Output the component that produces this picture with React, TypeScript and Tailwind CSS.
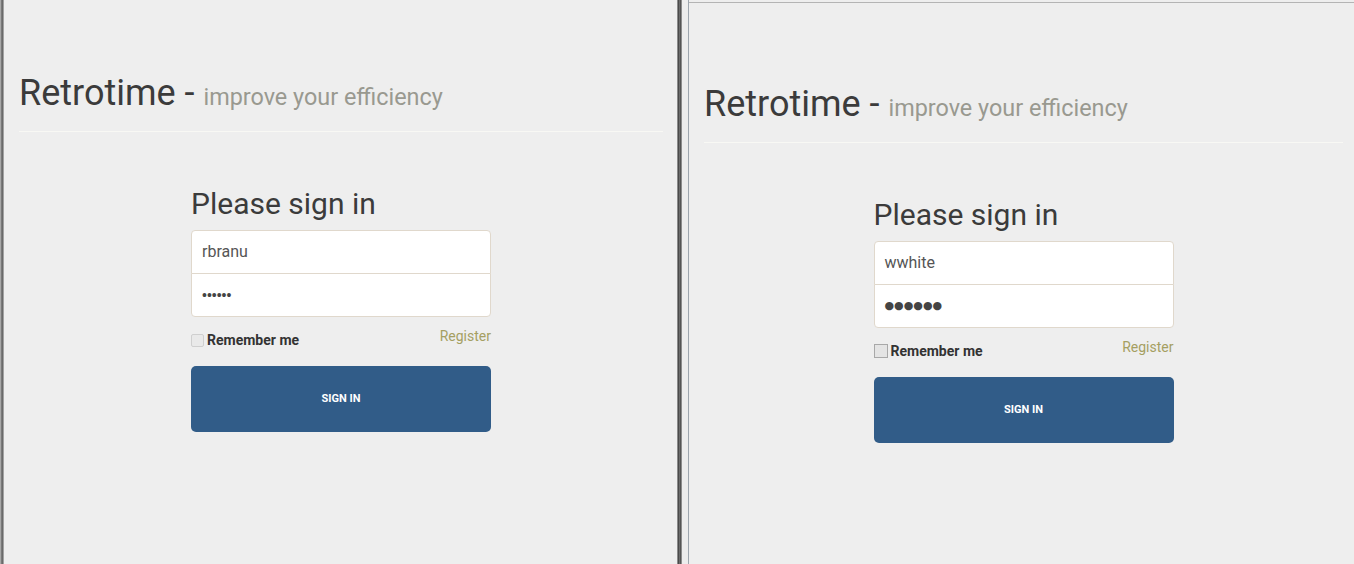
import React from "react";

const font = { fontFamily: "Roboto, 'Noto Sans', sans-serif" };

function Panel({ user, bigDots, square }: { user: string; bigDots: boolean; square: boolean }) {
  return (
    <div className="flex flex-col" style={font}>
      <h1 className="mt-[73px] text-[36px] leading-[40px] text-[#3b3b3b] font-normal whitespace-nowrap">
        Retrotime - <span className="text-[23.4px] text-[#999990]">improve your efficiency</span>
      </h1>
      <div className="mt-[14px] h-px bg-[#f8f8f4]" />
      <div className="mx-auto w-[300px] flex flex-col">
        <h2 className="mt-[55px] text-[30px] leading-[33px] text-[#3b3b3b] font-normal">Please sign in</h2>
        <div className="mt-[10px] h-[44px] bg-white border border-[#e0d8cc] rounded-t-[4px] flex items-center px-[10px] text-[16px] text-[#555]">
          {user}
        </div>
        <div className="-mt-px h-[44px] bg-white border border-[#e0d8cc] rounded-b-[4px] flex items-center px-[10px] text-[#444]">
          {bigDots ? (
            <span className="text-[11px]" style={{ fontFamily: "'DejaVu Sans', sans-serif" }}>●●●●●●</span>
          ) : (
            <span className="text-[14px] leading-none" style={{ fontFamily: "'Liberation Sans', sans-serif" }}>••••••</span>
          )}
        </div>
        <div className="mt-[11px] flex items-start justify-between">
          <div className="flex items-center mt-[2px]">
            {square ? (
              <span className="w-[14px] h-[14px] border border-[#a8a8a8] bg-[#e4e4e4]" />
            ) : (
              <span className="w-[13px] h-[13px] border border-[#cfcfcf] rounded-[2px] bg-[#e9e9e9]" />
            )}
            <span className="ml-[3px] text-[14px] font-bold text-[#333] leading-[20px]">Remember me</span>
          </div>
          <span className="text-[14px] leading-[16px] text-[#a59f62]">Register</span>
        </div>
        <div className="mt-[16px] h-[66px] rounded-[5px] bg-[#315c88] flex items-center justify-center text-white text-[11px] font-bold">
          SIGN IN
        </div>
      </div>
    </div>
  );
}

export default function App() {
  return (
    <div className="w-[1354px] h-[564px] flex bg-[#eeeeee] overflow-hidden">
      <div className="flex h-full">
        <div className="w-px h-full bg-[#a8a8a8]" />
        <div className="w-px h-full bg-[#7a7a7a]" />
        <div className="w-px h-full bg-[#6a6a6a]" />
        <div className="w-px h-full bg-[#a2a2a2]" />
      </div>
      <div className="w-[673px] h-full pl-[15px] pr-[14px]">
        <Panel user="rbranu" bigDots={false} square={false} />
      </div>
      <div className="flex h-full">
        <div className="w-px h-full bg-[#8a8a8a]" />
        <div className="w-px h-full bg-[#4a4a4a]" />
        <div className="w-px h-full bg-[#6c6c6c]" />
        <div className="w-px h-full bg-[#555555]" />
        <div className="w-px h-full bg-[#8c8c8c]" />
        <div className="w-[6px] h-full bg-[#ededed]" />
        <div className="w-px h-full bg-[#9ea6ae]" />
      </div>
      <div className="flex-1 h-full flex flex-col">
        <div className="h-[2px]" />
        <div className="h-px bg-[#b4b4b4]" />
        <div className="pl-[15px] pr-[11px] pt-[8px]">
          <Panel user="wwhite" bigDots={true} square={true} />
        </div>
      </div>
    </div>
  );
}
